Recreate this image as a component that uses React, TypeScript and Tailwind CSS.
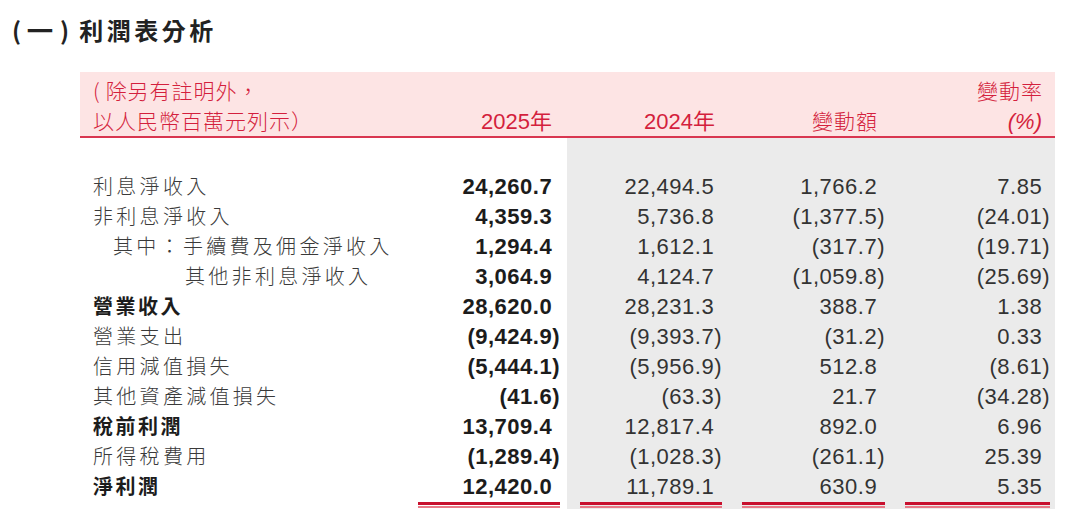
import React from "react";

type Row = {
  label: string;
  indent?: number;
  bold?: boolean;
  values: [string, string, string, string];
};

const rows: Row[] = [
  { label: "利息淨收入", values: ["24,260.7", "22,494.5", "1,766.2", "7.85"] },
  { label: "非利息淨收入", values: ["4,359.3", "5,736.8", "(1,377.5)", "(24.01)"] },
  { label: "其中：手續費及佣金淨收入", indent: 1, values: ["1,294.4", "1,612.1", "(317.7)", "(19.71)"] },
  { label: "其他非利息淨收入", indent: 2, values: ["3,064.9", "4,124.7", "(1,059.8)", "(25.69)"] },
  { label: "營業收入", bold: true, values: ["28,620.0", "28,231.3", "388.7", "1.38"] },
  { label: "營業支出", values: ["(9,424.9)", "(9,393.7)", "(31.2)", "0.33"] },
  { label: "信用減值損失", values: ["(5,444.1)", "(5,956.9)", "512.8", "(8.61)"] },
  { label: "其他資產減值損失", values: ["(41.6)", "(63.3)", "21.7", "(34.28)"] },
  { label: "稅前利潤", bold: true, values: ["13,709.4", "12,817.4", "892.0", "6.96"] },
  { label: "所得稅費用", values: ["(1,289.4)", "(1,028.3)", "(261.1)", "25.39"] },
  { label: "淨利潤", bold: true, values: ["12,420.0", "11,789.1", "630.9", "5.35"] },
];

// right-aligned number; positives keep room for the closing paren
function Num({ v, bold }: { v: string; bold?: boolean }) {
  const neg = v.startsWith("(");
  return (
    <div
      className={
        "h-[30px] flex items-center justify-end text-[22px] tracking-[0.5px] " +
        (bold ? "font-bold text-[#1c1c1c]" : "text-[#333]")
      }
    >
      <span>{v}</span>
      {!neg && <span className="invisible">)</span>}
    </div>
  );
}

function DoubleRule() {
  return (
    <div className="mt-[1px]">
      <div className="h-[3px] bg-[#c8102e]" />
      <div className="mt-[1px] h-[2px] bg-[#e77b88]" />
    </div>
  );
}

function NumCol({ idx, width }: { idx: number; width: string }) {
  return (
    <div className={width}>
      {rows.map((r, i) => (
        <Num key={i} v={r.values[idx]} bold={idx === 0} />
      ))}
      <DoubleRule />
    </div>
  );
}

const cjk = "font-['Noto_Sans_CJK_TC',sans-serif]";

export default function App() {
  return (
    <div className="w-[1080px] h-[524px] bg-white font-['Liberation_Sans','Noto_Sans_CJK_TC',sans-serif] overflow-hidden">
      {/* Title */}
      <div className="h-[72px] pl-[12px] pt-[14px]">
        <h2 className={"flex items-center text-[24px] font-bold text-[#222] leading-[32px] " + cjk}>
          <span>(</span>
          <span className="ml-[7px] scale-x-110">一</span>
          <span className="ml-[8px]">)</span>
          <span className="ml-[10px] tracking-[3.5px]">利潤表分析</span>
        </h2>
      </div>

      <div className="ml-[80px] w-[975px]">
        {/* Header */}
        <div className="bg-[#fde4e4] border-b-2 border-[#d93650] pt-1 text-[#d41f3d]">
          <div className="flex h-[30px] items-center">
            <div className={"flex-1 pl-[13px] text-[21px] tracking-[1px] font-light " + cjk}>
              (<span className="ml-[5px]">除另有註明外，</span>
            </div>
            <div className={"w-[145px] pr-[12px] text-right text-[21px] tracking-[1px] font-light " + cjk}>
              變動率
            </div>
          </div>
          <div className="flex h-[30px] items-center">
            <div className={"w-[338px] pl-[13px] text-[21px] tracking-[1px] font-light whitespace-nowrap " + cjk}>
              以人民幣百萬元列示）
            </div>
            <div className="w-[142px] pr-[8px] text-right text-[22px]">2025年</div>
            <div className="w-[162px] pr-[7px] text-right text-[22px]">2024年</div>
            <div className={"w-[163px] pr-[7px] text-right text-[21px] tracking-[1px] font-light " + cjk}>
              變動額
            </div>
            <div className="w-[165px] pr-[8px] text-right text-[22px] italic">(%)</div>
          </div>
        </div>

        {/* Body */}
        <div className="flex">
          <div className="w-[487px] flex pt-[33px]">
            <div className="w-[338px]">
              {rows.map((r, i) => (
                <div
                  key={i}
                  className={
                    "h-[30px] flex items-center text-[20px] whitespace-nowrap " +
                    cjk +
                    (r.bold ? " font-bold text-[#1c1c1c] tracking-[2.5px]" : " font-light text-[#3a3a3a] tracking-[3.3px]") +
                    (r.indent === 1 ? " pl-[33px]" : r.indent === 2 ? " pl-[105px]" : " pl-[13px]")
                  }
                >
                  {r.label}
                </div>
              ))}
            </div>
            <NumCol idx={0} width="w-[142px]" />
          </div>
          <div className="flex-1 bg-[#ebebeb] flex pt-[33px] pl-[13px] pr-[5px] pb-[1px] gap-[20px]">
            <NumCol idx={1} width="w-[142px]" />
            <NumCol idx={2} width="w-[143px]" />
            <NumCol idx={3} width="w-[145px]" />
          </div>
        </div>
      </div>
    </div>
  );
}
